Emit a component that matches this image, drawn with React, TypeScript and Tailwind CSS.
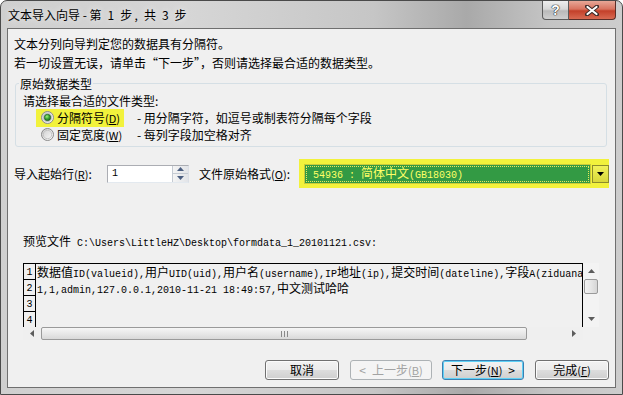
import React from "react";

// CJK runs keep the UI face, everything else in the preview is a fixed-width face (SimSun look)
const CJK_RE = /([\u2E80-\u9FFF\u3000-\u303F\uFF00-\uFFEF]+)/;

const Mixed: React.FC<{ text: string; className?: string }> = ({ text, className }) => (
  <span className={className}>
    {text
      .split(CJK_RE)
      .filter(Boolean)
      .map((part, i) =>
        CJK_RE.test(part) ? (
          <span key={i} className="font-['Noto_Sans_CJK_SC',sans-serif] text-[12px]">
            {part}
          </span>
        ) : (
          <span key={i} className="whitespace-pre font-['Liberation_Mono',monospace] text-[10px]">
            {part}
          </span>
        )
      )}
  </span>
);

const Key: React.FC<{ k: string }> = ({ k }) => (
  <span className="text-[11px]">
    (<span className="underline underline-offset-1">{k}</span>)
  </span>
);

const Radio: React.FC<{ checked?: boolean }> = ({ checked }) => (
  <svg width="13" height="13" viewBox="0 0 13 13" className="shrink-0">
    <defs>
      <linearGradient id="rOuter" x1="0" y1="0" x2="1" y2="1">
        <stop offset="0" stopColor="#c9c9c9" />
        <stop offset="1" stopColor="#ffffff" />
      </linearGradient>
      <linearGradient id="rInner" x1="0" y1="0" x2="1" y2="1">
        <stop offset="0" stopColor="#d2d2d2" />
        <stop offset="1" stopColor="#f7f7f7" />
      </linearGradient>
      <radialGradient id="rDot" cx="0.4" cy="0.35" r="0.7">
        <stop offset="0" stopColor="#9ff07a" />
        <stop offset="0.5" stopColor="#3ca534" />
        <stop offset="1" stopColor="#16601a" />
      </radialGradient>
    </defs>
    <circle cx="6.5" cy="6.5" r="6" fill="url(#rOuter)" stroke="#8b8b8b" />
    <circle cx="6.5" cy="6.5" r="4.2" fill="url(#rInner)" stroke="#bdbdbd" strokeWidth="0.8" />
    {checked && <circle cx="6.5" cy="6.5" r="3.2" fill="url(#rDot)" stroke="#205a22" strokeWidth="0.7" />}
  </svg>
);

const Tri: React.FC<{ dir: "up" | "down" | "left" | "right"; color?: string }> = ({ dir, color = "#5c5c5c" }) => {
  const d = {
    up: "M0 4 L3.5 0 L7 4 Z",
    down: "M0 0 L7 0 L3.5 4 Z",
    left: "M4 0 L4 7 L0 3.5 Z",
    right: "M0 0 L4 3.5 L0 7 Z",
  }[dir];
  const horiz = dir === "left" || dir === "right";
  return (
    <svg width={horiz ? 4 : 7} height={horiz ? 7 : 4} viewBox={horiz ? "0 0 4 7" : "0 0 7 4"}>
      <path d={d} fill={color} />
    </svg>
  );
};

const Btn: React.FC<{ w: string; kind?: "normal" | "default" | "disabled"; children: React.ReactNode }> = ({
  w,
  kind = "normal",
  children,
}) => (
  <div
    className={
      w +
      " flex h-[20px] items-center justify-center whitespace-pre rounded-[3px] border text-[12px] leading-none " +
      (kind === "disabled"
        ? "border-[#adb2b5] bg-[#f4f4f4] text-[#a3a3a3]"
        : kind === "default"
        ? "border-[#3c7fb1] bg-[linear-gradient(180deg,#f2f2f2_0%,#ebebeb_50%,#dddddd_50%,#cfcfcf_100%)] text-black shadow-[inset_0_0_0_1px_#5fd0f5]"
        : "border-[#707070] bg-[linear-gradient(180deg,#f2f2f2_0%,#ebebeb_50%,#dddddd_50%,#cfcfcf_100%)] text-black shadow-[inset_0_0_0_1px_#fbfbfb]")
    }
  >
    {children}
  </div>
);

const previewRows = [
  "数据值ID(valueid),用户UID(uid),用户名(username),IP地址(ip),提交时间(dateline),字段A(ziduana",
  "1,1,admin,127.0.0.1,2010-11-21 18:49:57,中文测试哈哈",
  "",
  "",
];

export default function App() {
  return (
    <div className="h-[395px] w-[623px] overflow-hidden bg-white font-['Noto_Sans_CJK_SC',sans-serif] text-[12px] text-black">
      <div className="flex h-full flex-col rounded-t-[7px] border border-[#4a4a4a] bg-[linear-gradient(90deg,#cfcfcf_0%,#d6d6d6_30%,#c6c6c6_60%,#a9a9a9_75%,#c4c4c4_88%,#cdcdcd_100%)]">
        {/* title bar */}
        <div className="flex h-[27px] shrink-0 items-start justify-between">
          <div className="whitespace-pre pl-[7px] pt-[6px] leading-[16px] [text-shadow:0_0_6px_#f4f4f4]">
            {"文本导入向导 - 第\u20021\u2002步\u2009,\u2002共\u20023\u2002步"}
          </div>
          <div className="mr-[6px] flex">
            <div className="flex h-[19px] w-[27px] items-center justify-center rounded-bl-[4px] border border-t-0 border-[#5b5b5b] bg-[linear-gradient(180deg,#eeeeee_0%,#d8d8d8_45%,#b9b9b9_55%,#cfcfcf_100%)] font-['Liberation_Sans',sans-serif] text-[14px] font-bold text-white [text-shadow:0_0_1px_#222,0_0_1px_#222,0_0_1px_#222]">
              ?
            </div>
            <div className="flex h-[19px] w-[47px] items-center justify-center rounded-br-[4px] border border-l-0 border-t-0 border-[#5a2e28] bg-[linear-gradient(180deg,#e7a797_0%,#d8735f_45%,#c3402a_55%,#d86a52_100%)]">
              <svg width="14" height="11" viewBox="0 0 14 11">
                <path d="M2 1.5 L12 9.5 M12 1.5 L2 9.5" stroke="#3b2a28" strokeWidth="4" strokeLinecap="round" />
                <path d="M2.5 2 L11.5 9 M11.5 2 L2.5 9" stroke="#ffffff" strokeWidth="2.2" strokeLinecap="round" />
              </svg>
            </div>
          </div>
        </div>

        {/* client area */}
        <div className="mx-[6px] mb-[6px] flex flex-1 flex-col border border-[#6f6f6f] bg-[#f0f0f0] pt-[5px]">
          <div className="flex h-[19px] items-center pl-[6px]">文本分列向导判定您的数据具有分隔符。</div>
          <div className="flex h-[19px] items-center pl-[6px]">
            若一切设置无误，请单击“下一步”，否则请选择最合适的数据类型。
          </div>

          <fieldset className="ml-[7px] mr-[8px] mt-[4px] rounded-[3px] border border-[#d5dfe5] pb-[3px]">
            <legend className="ml-[3px] px-[1px] leading-[15px]">原始数据类型</legend>
            <div className="mt-[2px] flex h-[16px] items-center pl-[7px]">请选择最合适的文件类型:</div>
            <div className="flex h-[17px] items-center">
              <div className="ml-[20px] w-[101px]">
                <div className="flex h-[18px] w-[88px] items-center gap-[3px] bg-[#f2f23c] pl-[5px]">
                  <Radio checked />
                  <span>
                    分隔符号<Key k="D" />
                  </span>
                </div>
              </div>
              <span>- 用分隔字符，如逗号或制表符分隔每个字段</span>
            </div>
            <div className="flex h-[17px] items-center">
              <div className="ml-[20px] w-[101px]">
                <div className="flex h-[18px] items-center gap-[3px] pl-[5px]">
                  <Radio />
                  <span>
                    固定宽度<Key k="W" />
                  </span>
                </div>
              </div>
              <span>- 每列字段加空格对齐</span>
            </div>
          </fieldset>

          {/* start row / file origin */}
          <div className="mt-[12px] flex h-[29px] items-center">
            <div className="ml-[6px] w-[93px]">
              导入起始行<Key k="R" />:
            </div>
            <div className="flex h-[18px] w-[82px] border border-[#abadb3] border-b-[#e3e9ef] border-r-[#dbdfe6] bg-white">
              <div className="flex-1 pl-[4px] font-['Liberation_Mono',monospace] text-[10px] leading-[16px]">1</div>
              <div className="flex w-[16px] flex-col border-l border-[#c5cbd3] bg-[linear-gradient(90deg,#f4f4f4,#e2e4e8)]">
                <div className="flex flex-1 items-center justify-center border-b border-[#c5cbd3]">
                  <Tri dir="up" color="#4b5e80" />
                </div>
                <div className="flex flex-1 items-center justify-center">
                  <Tri dir="down" color="#4b5e80" />
                </div>
              </div>
            </div>
            <div className="ml-[10px] w-[100px]">
              文件原始格式<Key k="O" />:
            </div>
            <div className="flex h-[29px] w-[310px] items-center bg-[#f2f23c] pl-[5px]">
              <div className="flex h-[20px] w-[287px] items-center border border-[#c9c93a] bg-[#339a44] p-[1px]">
                <div className="flex h-full w-full items-center border border-dotted border-[#e8e85a] pl-[6px] text-[#ffff66]">
                  <Mixed text="54936 : 简体中文(GB18030)" />
                </div>
              </div>
              <div className="ml-[1px] flex h-[18px] w-[17px] items-center justify-center border border-[#8c8c2c] bg-[linear-gradient(180deg,#f1f15a,#d8d83a)]">
                <Tri dir="down" color="#000000" />
              </div>
            </div>
          </div>

          {/* preview */}
          <div className="ml-[15px] mt-[45px] flex h-[16px] items-center whitespace-nowrap">
            <Mixed text="预览文件 C:\Users\LittleHZ\Desktop\formdata_1_20101121.csv:" />
          </div>

          <div className="ml-[15px] mt-[14px] grid w-[576px] grid-cols-[560px_16px] grid-rows-[64px_13px]">
            <div className="overflow-hidden border-l border-r border-t border-black">
              {previewRows.map((row, i) => (
                <div key={i} className="flex h-[16px] items-end">
                  <div className="flex h-[16px] w-[12px] shrink-0 items-end justify-center border-b border-r border-black font-['Liberation_Mono',monospace] text-[10px] leading-[13px]">
                    {i + 1}
                  </div>
                  <div className="flex h-[16px] items-center whitespace-nowrap pl-[1px]">
                    <Mixed text={row} />
                  </div>
                </div>
              ))}
            </div>
            <div className="flex flex-col bg-[#f3f3f3]">
              <div className="flex h-[16px] items-center justify-center">
                <Tri dir="up" />
              </div>
              <div className="mx-[1px] h-[15px] rounded-[2px] border border-[#9a9a9a] bg-[linear-gradient(90deg,#f3f3f3,#e6e6e6_50%,#d6d6d6)]" />
              <div className="flex-1" />
              <div className="flex h-[16px] items-center justify-center">
                <Tri dir="down" />
              </div>
            </div>
            <div className="flex bg-[#efefef]">
              <div className="flex w-[18px] items-center justify-center">
                <Tri dir="left" />
              </div>
              <div className="flex w-[486px] items-center justify-center rounded-[2px] border border-[#9a9a9a] bg-[linear-gradient(180deg,#f6f6f6,#e8e8e8_50%,#d9d9d9)]">
                <div className="flex gap-[2px]">
                  <div className="h-[6px] w-[1px] bg-[#8a8a8a]" />
                  <div className="h-[6px] w-[1px] bg-[#8a8a8a]" />
                  <div className="h-[6px] w-[1px] bg-[#8a8a8a]" />
                </div>
              </div>
              <div className="flex-1" />
              <div className="flex w-[18px] items-center justify-center">
                <Tri dir="right" />
              </div>
            </div>
            <div className="bg-[#f0f0f0]" />
          </div>

          {/* buttons */}
          <div className="mr-[6px] mt-[20px] flex justify-end">
            <Btn w="w-[74px]">取消</Btn>
            <div className="w-[11px]" />
            <Btn w="w-[82px]" kind="disabled">
              {"<\u2002上一步"}
              <Key k="B" />
            </Btn>
            <div className="w-[10px]" />
            <Btn w="w-[82px]" kind="default">
              下一步<Key k="N" />
              {"\u2002>"}
            </Btn>
            <div className="w-[11px]" />
            <Btn w="w-[74px]">
              完成<Key k="F" />
            </Btn>
          </div>
        </div>
      </div>
    </div>
  );
}
